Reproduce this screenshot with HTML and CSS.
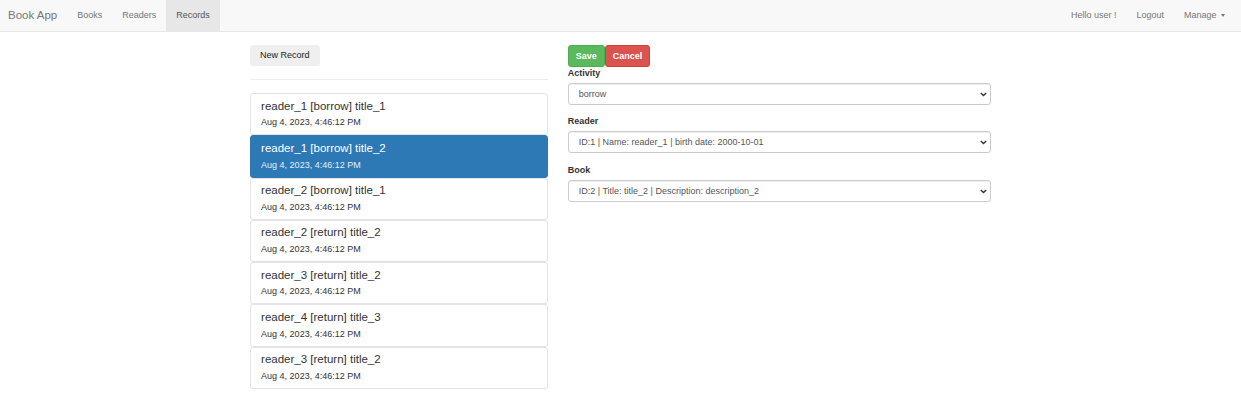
FILE: index.html
```html
<!DOCTYPE html>
<html>
<head>
<meta charset="utf-8">
<title>Book App</title>
<link rel="stylesheet" href="styles.css">
</head>
<body>
<nav class="navbar">
  <div class="nav-left">
    <a class="brand">Book App</a>
    <a class="nav-link">Books</a>
    <a class="nav-link">Readers</a>
    <a class="nav-link active">Records</a>
  </div>
  <div class="nav-right">
    <span class="nav-link">Hello user !</span>
    <a class="nav-link">Logout</a>
    <a class="nav-link">Manage <span class="caret"></span></a>
  </div>
</nav>
<main class="container">
  <section class="col-left">
    <button class="btn btn-default">New Record</button>
    <hr class="divider">
    <div class="list-group">
      <a class="list-item"><h4 class="item-title">reader_1 [borrow] title_1</h4><p class="item-date">Aug 4, 2023, 4:46:12 PM</p></a>
      <a class="list-item active"><h4 class="item-title">reader_1 [borrow] title_2</h4><p class="item-date">Aug 4, 2023, 4:46:12 PM</p></a>
      <a class="list-item"><h4 class="item-title">reader_2 [borrow] title_1</h4><p class="item-date">Aug 4, 2023, 4:46:12 PM</p></a>
      <a class="list-item"><h4 class="item-title">reader_2 [return] title_2</h4><p class="item-date">Aug 4, 2023, 4:46:12 PM</p></a>
      <a class="list-item"><h4 class="item-title">reader_3 [return] title_2</h4><p class="item-date">Aug 4, 2023, 4:46:12 PM</p></a>
      <a class="list-item"><h4 class="item-title">reader_4 [return] title_3</h4><p class="item-date">Aug 4, 2023, 4:46:12 PM</p></a>
      <a class="list-item"><h4 class="item-title">reader_3 [return] title_2</h4><p class="item-date">Aug 4, 2023, 4:46:12 PM</p></a>
    </div>
  </section>
  <section class="col-right">
    <div class="btn-row">
      <button class="btn btn-success">Save</button><button class="btn btn-danger">Cancel</button>
    </div>
    <div class="form-group">
      <label class="label">Activity</label>
      <div class="select-wrap">
        <select class="form-control"><option>borrow</option><option>return</option></select>
        <svg class="chev" width="7" height="5" viewBox="0 0 7 5"><path d="M0.8 1 L3.5 3.6 L6.2 1" fill="none" stroke="#333" stroke-width="1.4"/></svg>
      </div>
    </div>
    <div class="form-group">
      <label class="label">Reader</label>
      <div class="select-wrap">
        <select class="form-control"><option>ID:1 | Name: reader_1 | birth date: 2000-10-01</option></select>
        <svg class="chev" width="7" height="5" viewBox="0 0 7 5"><path d="M0.8 1 L3.5 3.6 L6.2 1" fill="none" stroke="#333" stroke-width="1.4"/></svg>
      </div>
    </div>
    <div class="form-group">
      <label class="label">Book</label>
      <div class="select-wrap">
        <select class="form-control"><option>ID:2 | Title: title_2 | Description: description_2</option></select>
        <svg class="chev" width="7" height="5" viewBox="0 0 7 5"><path d="M0.8 1 L3.5 3.6 L6.2 1" fill="none" stroke="#333" stroke-width="1.4"/></svg>
      </div>
    </div>
  </section>
</main>
</body>
</html>
```
FILE: styles.css
```css
* { box-sizing: border-box; }
body {
  margin: 0;
  font-family: "Liberation Sans", Arial, sans-serif;
  font-size: 9px;
  line-height: 1.42857;
  color: #333;
  background: #fff;
}
.navbar {
  display: flex;
  justify-content: space-between;
  height: 32px;
  background: #f8f8f8;
  border-bottom: 1px solid #e7e7e7;
}
.nav-left, .nav-right { display: flex; align-items: stretch; }
.nav-right { padding-right: 6px; }
.brand {
  padding: 0 10px 0 8px;
  font-size: 11.5px;
  line-height: 31px;
  color: #777;
}
.nav-link {
  padding: 0 10px;
  line-height: 31px;
  color: #777;
}
.nav-link.active { background: #e7e7e7; color: #555; }
.caret {
  display: inline-block;
  width: 0; height: 0;
  margin-left: 2px;
  vertical-align: middle;
  border-top: 3px solid #777;
  border-left: 2.5px solid transparent;
  border-right: 2.5px solid transparent;
}
.container {
  width: 760px;
  margin: 13px auto 0;
  display: grid;
  grid-template-columns: 5fr 7fr;
}
.col-left { padding: 0 9.6px; }
.col-right { padding: 0 9.6px 0 10.6px; }
.btn {
  display: inline-block;
  height: 21px;
  padding: 0 9px;
  font-family: inherit;
  font-size: 9px;
  line-height: 19px;
  border: 1px solid transparent;
  border-radius: 3px;
  cursor: pointer;
}
.btn-default { background: #efefef; border-color: #efefef; color: #222; }
.btn-row { height: 22px; display: flex; }
.btn-success, .btn-danger { height: 22px; font-weight: bold; color: #fff; padding: 0 7px; }
.btn-success { background: #5cb85c; border-color: #4cae4c; width: 37px; }
.btn-danger { background: #d9534f; border-color: #d43f3a; width: 45px; }
.divider {
  margin: 13px 0 13px;
  border: 0;
  border-top: 1px solid #eee;
}
.list-group { display: flex; flex-direction: column; }
.list-item {
  display: block;
  padding: 5.6px 10px;
  border: 1px solid #e3e3e3;
  border-radius: 3px;
  background: #fff;
  color: #333;
  height: 42.3px;
}
.list-item.active { background: #2d79b5; border-color: #2d79b5; color: #fff; }
.item-title {
  margin: 0 0 5px;
  font-size: 11.5px;
  font-weight: normal;
  line-height: 1.1;
}
.item-date {
  margin: 0;
  font-size: 9px;
  line-height: 1.3;
}
.active .item-date { color: #e6effa; }
.form-group { margin-bottom: 10.4px; }
.label {
  display: block;
  margin-bottom: 3.2px;
  font-weight: bold;
  color: #333;
}
.select-wrap { position: relative; }
.form-control {
  display: block;
  width: 100%;
  height: 22px;
  padding: 0 10px;
  font-family: inherit;
  font-size: 9px;
  color: #555;
  background: #fff;
  border: 1px solid #ccc;
  border-radius: 3px;
  box-shadow: inset 0 1px 1px rgba(0,0,0,0.075);
  appearance: none;
  -webkit-appearance: none;
}
.chev {
  position: absolute;
  right: 4px;
  top: 9px;
  pointer-events: none;
}
```
